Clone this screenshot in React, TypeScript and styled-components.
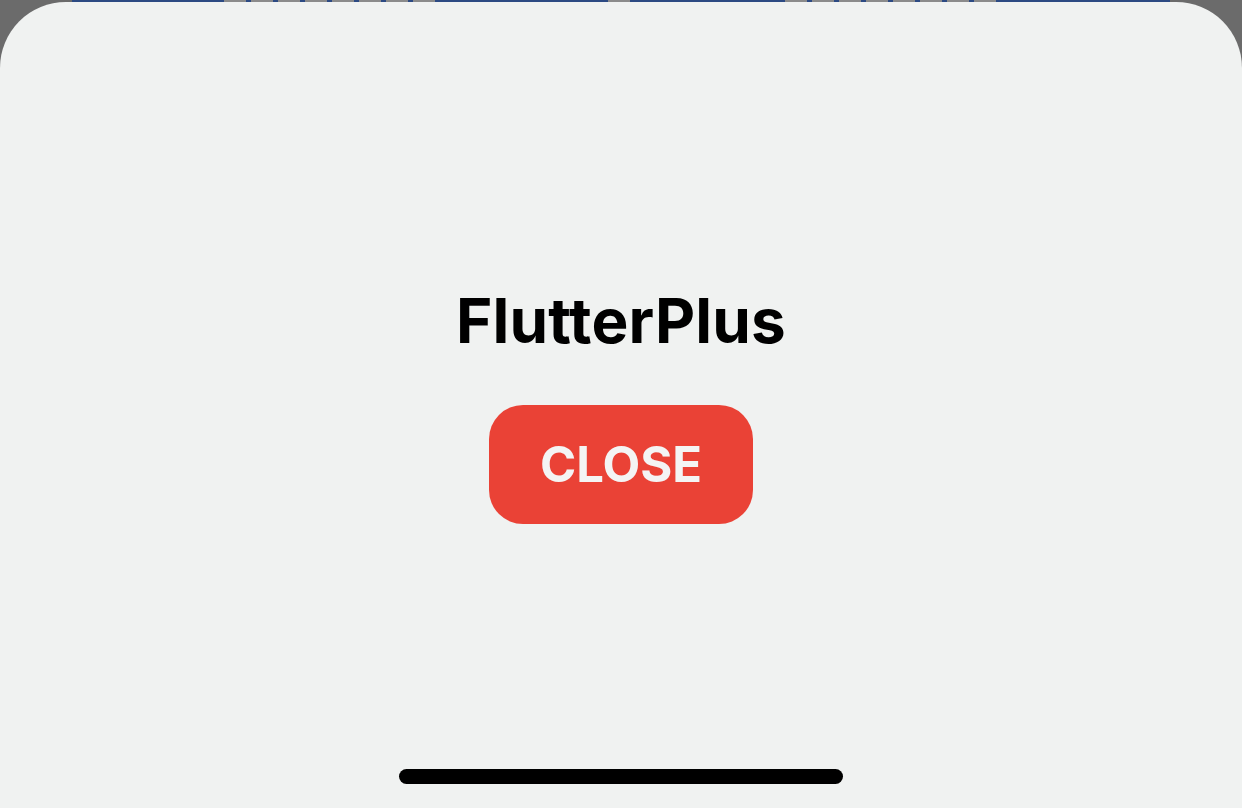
import * as React from 'react';
import styled, {createGlobalStyle} from 'styled-components';

const GlobalStyle = createGlobalStyle`
  html, body {
    margin: 0;
    padding: 0;
    height: 100%;
    background: #6b6b6b;
    font-family: Inter, "Liberation Sans", sans-serif;
  }
  #root {
    height: 100%;
  }
`;

const Screen = styled.div`
  height: 100vh;
  display: flex;
  flex-direction: column;
  overflow: hidden;
`;

// peek of the page behind the sheet
const BehindStrip = styled.div`
  height: 2px;
  flex-shrink: 0;
  display: flex;
  padding: 0 72px;
`;

const Seg = styled.div<{ $w: number; $text?: boolean }>`
  width: ${p => p.$w}px;
  height: 100%;
  background: ${p => p.$text
    ? 'repeating-linear-gradient(90deg, #8b8b8b 0 22px, #2c4a83 22px 27px)'
    : '#2c4a83'};
`;

const Sheet = styled.div`
  flex: 1;
  background: #f0f2f1;
  border-radius: 66px 66px 0 0;
  display: flex;
  flex-direction: column;
  align-items: center;
  padding-top: 288px;
  padding-bottom: 24px;
`;

const Title = styled.h1`
  margin: 0;
  font-size: 62px;
  line-height: 62px;
  font-weight: 700;
  color: #000;
  letter-spacing: 0.2px;
`;

const CloseButton = styled.button`
  margin-top: 53px;
  width: 264px;
  height: 119px;
  border: none;
  border-radius: 34px;
  background: #ea4236;
  color: #f4f4f4;
  font-family: Inter, "Liberation Sans", sans-serif;
  font-size: 49px;
  font-weight: 700;
  display: flex;
  align-items: center;
  justify-content: center;
  padding: 0;
  cursor: pointer;
`;

const HomeIndicator = styled.div`
  margin-top: auto;
  width: 444px;
  height: 15px;
  border-radius: 8px;
  background: #000;
`;

export default function App() {
  return (
    <Screen>
      <GlobalStyle/>
      <BehindStrip>
        <Seg $w={152}/>
        <Seg $w={216} $text/>
        <Seg $w={168}/>
        <Seg $w={25} $text/>
        <Seg $w={152}/>
        <Seg $w={216} $text/>
        <Seg $w={169}/>
      </BehindStrip>
      <Sheet>
        <Title>FlutterPlus</Title>
        <CloseButton>CLOSE</CloseButton>
        <HomeIndicator/>
      </Sheet>
    </Screen>
  );
}
